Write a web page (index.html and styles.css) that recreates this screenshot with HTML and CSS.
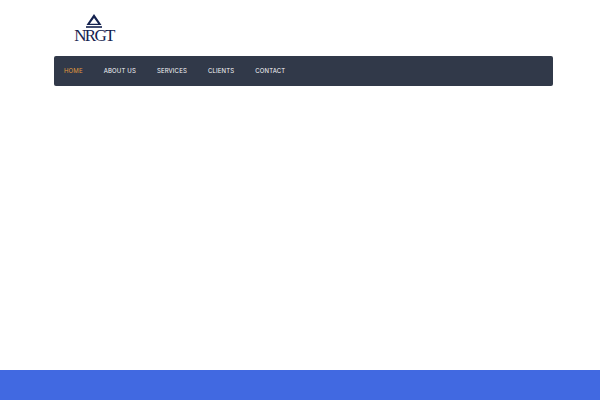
FILE: index.html
```html
<!DOCTYPE html>
<html lang="en">
<head>
    <meta charset="UTF-8">
    <meta name="viewport" content="width=device-width, initial-scale=1.0">
    <title>NRGT</title>
    <link rel="stylesheet" href="styles.css">
</head>
<body>
    <div class="page">
        <div class="container">
            <header class="logo-row">
                <a class="logo" href="#">
                    <svg class="logo-mark" width="18" height="16" viewBox="0 0 18 16" aria-hidden="true">
                        <path d="M9 0 L16.5 11 H1.5 Z M9 4 L4.8 9.8 H13.2 Z" fill="#14224f" fill-rule="evenodd"/>
                        <rect x="1" y="12.2" width="16" height="1.6" fill="#14224f"/>
                    </svg>
                    <span class="logo-text">NRGT</span>
                </a>
            </header>
            <nav class="navbar">
                <a class="nav-link active" href="#">HOME</a>
                <a class="nav-link" href="#">ABOUT US</a>
                <a class="nav-link" href="#">SERVICES</a>
                <a class="nav-link" href="#">CLIENTS</a>
                <a class="nav-link" href="#">CONTACT</a>
            </nav>
        </div>
        <div class="footer-band"></div>
    </div>
</body>
</html>
```

FILE: styles.css
```css
html, body {
    margin: 0;
    padding: 0;
    height: 100%;
    overflow: hidden;
    background-color: #fff;
    font-family: Inter, "Liberation Sans", sans-serif;
}
.page {
    display: flex;
    flex-direction: column;
    height: 400px;
}
.container {
    flex: 1;
    padding: 14px 47px 0 54px;
}
.logo-row {
    display: flex;
    height: 42px;
    padding-left: 20px;
}
.logo {
    display: flex;
    flex-direction: column;
    align-items: center;
    width: 40px;
    text-decoration: none;
}
.logo-mark {
    display: block;
}
.logo-text {
    margin-top: -1px;
    font-family: "Liberation Serif", serif;
    font-size: 17px;
    line-height: 14px;
    letter-spacing: -1.7px;
    color: #14224f;
}
.navbar {
    display: flex;
    align-items: center;
    gap: 21px;
    height: 30px;
    padding: 0 10px;
    background-color: #313949;
    border-radius: 2px;
}
.nav-link {
    font-size: 6px;
    line-height: 7px;
    margin-top: -1px;
    letter-spacing: 0.15px;
    color: #f7f8fa;
    text-decoration: none;
}
.nav-link.active {
    color: #e09a3e;
}
.footer-band {
    height: 30px;
    background-color: #4169e1;
}
```
